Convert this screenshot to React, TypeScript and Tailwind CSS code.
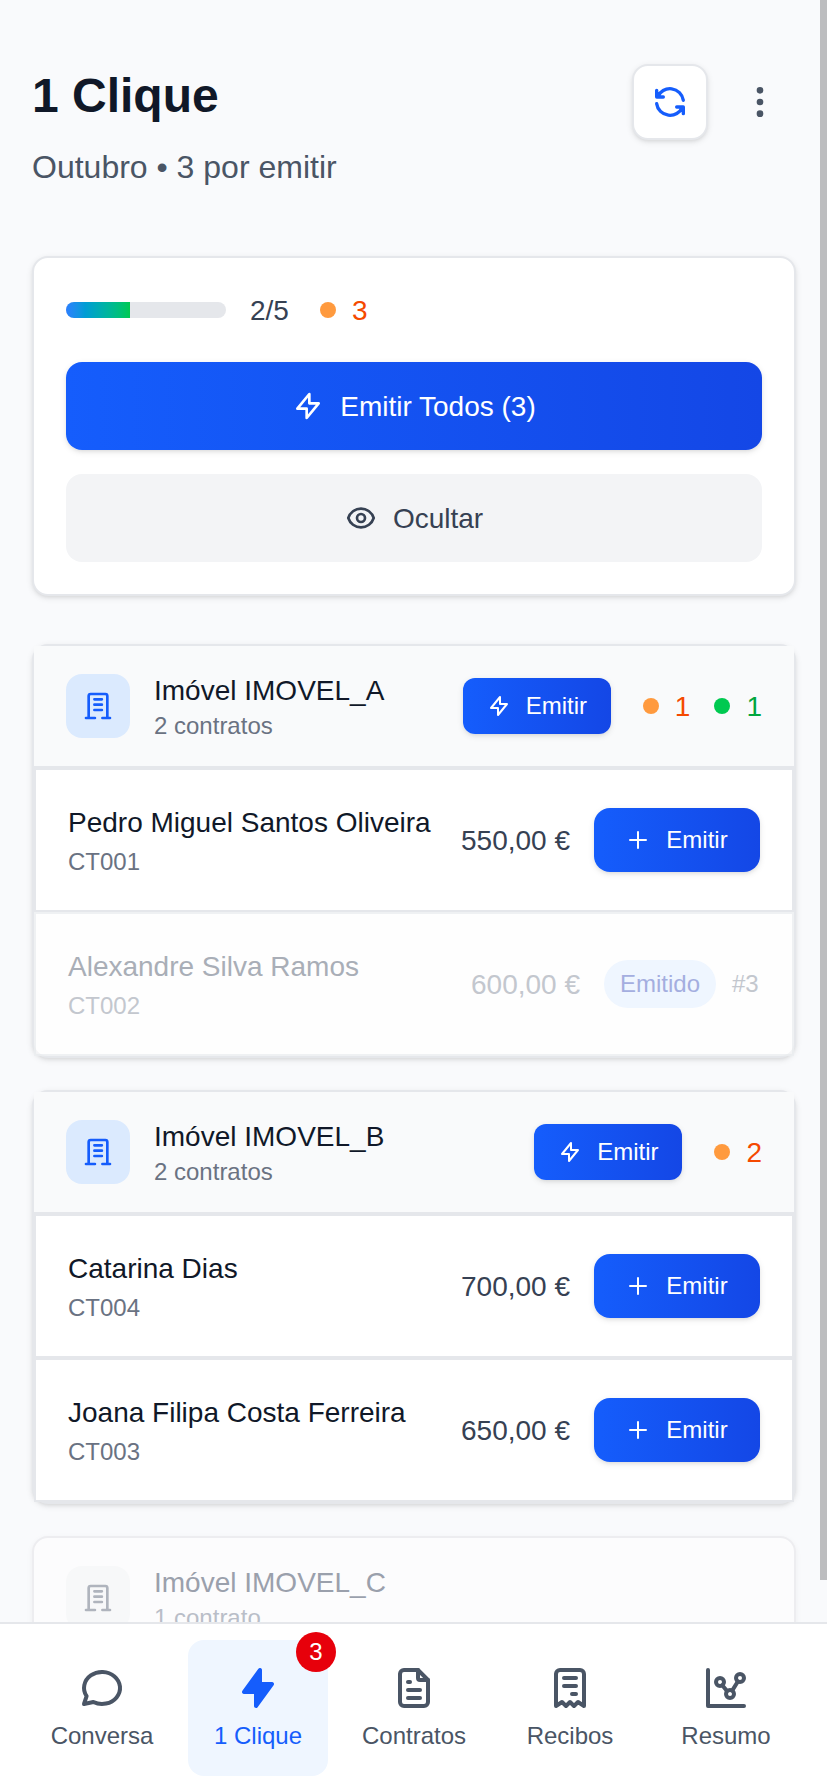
import clsx from 'clsx';
import { TbBoltFilled, TbChartDots, TbFileText, TbMessageCircle, TbReceipt, TbRefresh } from 'react-icons/tb';
import { HiOutlineDotsVertical, HiOutlineEye, HiOutlineLightningBolt, HiOutlinePlus } from 'react-icons/hi';

const properties = [
  {
    id: 'A',
    name: 'Imóvel IMOVEL_A',
    count: '2 contratos',
    pending: 1,
    issued: 1,
    contracts: [
      { id: 'CT001', tenant: 'Pedro Miguel Santos Oliveira', amount: '550,00 €', receipt: '' },
      { id: 'CT002', tenant: 'Alexandre Silva Ramos', amount: '600,00 €', receipt: '#3' },
    ],
  },
  {
    id: 'B',
    name: 'Imóvel IMOVEL_B',
    count: '2 contratos',
    pending: 2,
    issued: 0,
    contracts: [
      { id: 'CT004', tenant: 'Catarina Dias', amount: '700,00 €', receipt: '' },
      { id: 'CT003', tenant: 'Joana Filipa Costa Ferreira', amount: '650,00 €', receipt: '' },
    ],
  },
];

const tabs = [
  { label: 'Conversa', icon: TbMessageCircle },
  { label: '1 Clique', icon: TbBoltFilled, active: true, badge: 3 },
  { label: 'Contratos', icon: TbFileText },
  { label: 'Recibos', icon: TbReceipt },
  { label: 'Resumo', icon: TbChartDots },
];

function BuildingIcon() {
  return (
    <svg width="32" height="32" viewBox="0 0 24 24" fill="none" stroke="currentColor" strokeWidth="2" strokeLinecap="round" strokeLinejoin="round">
      <path d="M3 21h6.7M15.3 21h5.7M5 21V4.500a1.500 1.500 0 0 1 1.500-1.500h11a1.500 1.500 0 0 1 1.500 1.500v16.500M9.300 7h5.600M9.300 11h5.600M9.300 15h5.600" />
    </svg>
  );
}

function Counter({ value, done = false }: { value: number; done?: boolean }) {
  return (
    <div className="flex items-center gap-4">
      <span className={clsx('w-4 h-4 rounded-full', done ? 'bg-[#00c950]' : 'bg-[#ff9a3e]')} />
      <span className={clsx('pt-px -mb-px text-[28px] leading-10', done ? 'text-[#00a63e]' : 'text-[#f54900]')}>{value}</span>
    </div>
  );
}

function PropertyTitle({ name, count, muted = false }: { name: string; count: string; muted?: boolean }) {
  return (
    <div className="flex items-center gap-6">
      <div className={clsx('w-16 h-16 rounded-2xl flex items-center justify-center', muted ? 'bg-[#f7f8f9] text-[#afb4bd]' : 'bg-[#dbeafe] text-[#155dfc]')}>
        <BuildingIcon />
      </div>
      <div>
        <p className={clsx('pt-px -mb-px text-[28px] leading-10', muted ? 'text-[#9aa0ac]' : 'text-[#101828]')}>{name}</p>
        <p className={clsx('text-2xl leading-8', muted ? 'text-[#b9bec8]' : 'text-[#6a7282]')}>{count}</p>
      </div>
    </div>
  );
}

export default function App() {
  return (
    <div className="relative w-[827px] h-[1792px] overflow-hidden bg-[#f9fafc] flex flex-col font-['Liberation_Sans',Arial,sans-serif]">
      <main className="w-[828px] h-[1622px] overflow-hidden px-8 shrink-0">
        {/* Header */}
        <header className="flex justify-between pt-16 h-64">
          <div>
            <h1 className="text-5xl leading-[64px] font-bold text-[#101828]">1 Clique</h1>
            <p className="mt-4 text-[32px] leading-[46px] text-[#4a5565]">Outubro • 3 por emitir</p>
          </div>
          <div className="flex gap-4">
            <button className="w-[76px] h-[76px] rounded-2xl border-2 border-[#e5e7eb] bg-white shadow-[0_2px_6px_rgba(0,0,0,0.1),0_2px_4px_-2px_rgba(0,0,0,0.1)] flex items-center justify-center text-[#155dfc]">
              <TbRefresh size={40} />
            </button>
            <button className="w-[72px] h-[76px] flex items-center justify-center text-[#4a5565]">
              <HiOutlineDotsVertical size={40} />
            </button>
          </div>
        </header>

        {/* Monthly progress */}
        <section className="h-[340px] rounded-2xl border-2 border-[#e5e7eb] bg-white p-8 shadow-[0_2px_6px_rgba(0,0,0,0.1),0_2px_4px_-2px_rgba(0,0,0,0.1)]">
          <div className="flex items-center">
            <div className="w-40 h-4 rounded-full bg-[#e5e7eb] overflow-hidden">
              <div className="w-2/5 h-full bg-gradient-to-r from-[#2b7fff] to-[#00c950]" />
            </div>
            <span className="ml-6 mr-[31px] pt-px -mb-px text-[28px] leading-10 text-[#364153]">2/5</span>
            <Counter value={3} />
          </div>
          <button className="mt-8 w-full h-[88px] rounded-2xl bg-gradient-to-r from-[#155dfc] to-[#1447e6] text-white text-[28px] flex items-center justify-center gap-4 shadow-[0_2px_6px_rgba(0,0,0,0.1),0_2px_4px_-2px_rgba(0,0,0,0.1)]">
            <HiOutlineLightningBolt size={32} />
            <span className="pt-px -mb-px">Emitir Todos (3)</span>
          </button>
          <button className="mt-6 w-full h-[88px] rounded-2xl bg-[#f3f4f6] text-[#364153] text-[28px] flex items-center justify-center gap-4">
            <HiOutlineEye size={32} />
            <span className="pt-px -mb-px">Ocultar</span>
          </button>
        </section>

        {/* Properties */}
        <div className="mt-12 flex flex-col gap-8">
          {properties.map(property => (
            <section key={property.id} className="rounded-2xl border-2 border-[#e5e7eb] bg-white shadow-[0_2px_6px_rgba(0,0,0,0.1),0_2px_4px_-2px_rgba(0,0,0,0.1)]">
              <div className="h-[122px] px-8 bg-[#f9fafb] border-b-2 border-[#e5e7eb] flex items-center justify-between">
                <PropertyTitle name={property.name} count={property.count} />
                <div className="flex items-center gap-6">
                  <button className="mr-2 w-[148px] h-14 rounded-xl bg-gradient-to-r from-[#155dfc] to-[#1447e6] text-white text-2xl flex items-center justify-center gap-[15px] shadow-[0_2px_6px_rgba(0,0,0,0.1),0_2px_4px_-2px_rgba(0,0,0,0.1)]">
                    <HiOutlineLightningBolt size={24} />
                    Emitir
                  </button>
                  <Counter value={property.pending} />
                  {property.issued > 0 && <Counter value={property.issued} done />}
                </div>
              </div>
              {property.contracts.map(contract => (
                <div
                  key={contract.id}
                  className={clsx(
                    'h-36 px-8 border-2 flex items-center justify-between',
                    contract.receipt ? 'border-[#e5e7eb]/60 bg-[#fdfefe]/60' : 'border-[#e5e7eb] bg-white'
                  )}
                >
                  <div>
                    <p className={clsx('pt-px -mb-px text-[28px] leading-10', contract.receipt ? 'text-[#a9aeb7]' : 'text-[#101828]')}>{contract.tenant}</p>
                    <p className={clsx('mt-1 text-2xl leading-8', contract.receipt ? 'text-[#c3c7ce]' : 'text-[#6a7282]')}>{contract.id}</p>
                  </div>
                  <div className="flex items-center gap-6">
                    <span className={clsx('pt-px -mb-px text-[28px] leading-10', contract.receipt ? 'text-[#c3c7ce]' : 'text-[#364153]')}>{contract.amount}</span>
                    {contract.receipt ? (
                      <div className="flex items-center gap-4 text-2xl">
                        <span className="w-28 h-12 rounded-full bg-[#eff6ff] text-[#a4aee0] flex items-center justify-center">Emitido</span>
                        <span className="w-7 text-[#c3c7ce]">{contract.receipt}</span>
                      </div>
                    ) : (
                      <button className="w-[166px] h-16 rounded-2xl bg-gradient-to-r from-[#155dfc] to-[#1447e6] text-white text-2xl flex items-center justify-center gap-4 shadow-[0_2px_6px_rgba(0,0,0,0.1),0_2px_4px_-2px_rgba(0,0,0,0.1)]">
                        <HiOutlinePlus size={24} />
                        Emitir
                      </button>
                    )}
                  </div>
                </div>
              ))}
            </section>
          ))}

          <section className="h-[124px] rounded-2xl border-2 border-[#ededf0] bg-[#fcfcfd] px-8 py-6 shadow-[0_2px_6px_rgba(0,0,0,0.05)]">
            <PropertyTitle name="Imóvel IMOVEL_C" count="1 contrato" muted />
          </section>
        </div>
      </main>

      {/* Bottom navigation */}
      <nav className="w-[828px] h-[170px] shrink-0 bg-white border-t-2 border-[#e5e7eb] px-8 py-4 grid grid-cols-5 gap-4">
        {tabs.map(tab => (
          <button
            key={tab.label}
            className={clsx(
              'relative h-[136px] py-6 rounded-2xl flex flex-col items-center gap-2',
              tab.active ? 'bg-[#eff6ff] text-[#155dfc]' : 'text-[#4a5565]'
            )}
          >
            <tab.icon size={48} />
            <span className="text-2xl leading-8">{tab.label}</span>
            {tab.badge && (
              <span className="absolute -top-2 -right-2 w-10 h-10 rounded-full bg-[#e7000b] text-white text-2xl flex items-center justify-center">{tab.badge}</span>
            )}
          </button>
        ))}
      </nav>

      {/* Scroll thumb */}
      <div className="absolute top-0 right-0 w-[7px] h-[1580px] bg-[#bcbdbf]" />
    </div>
  );
}
